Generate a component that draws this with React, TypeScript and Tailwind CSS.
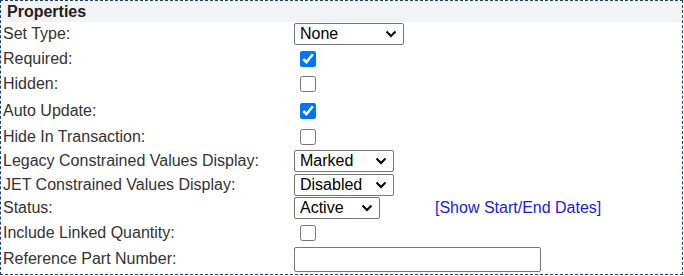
import React from "react";

type Row = {
  label: string;
  h: string;
  control: React.ReactNode;
};

function Select({ value, options, width }: { value: string; options: string[]; width: string }) {
  return (
    <select
      defaultValue={value}
      className={`${width} h-[22px] border border-[#767676] rounded-[2px] bg-white pl-[5px] text-[16px] leading-[18px] text-black appearance-none bg-no-repeat`}
      style={{
        backgroundImage:
          "url(\"data:image/svg+xml,%3Csvg xmlns='http://www.w3.org/2000/svg' width='12' height='8' viewBox='0 0 12 8'%3E%3Cpath d='M1.5 1.5 6 6l4.5-4.5' fill='none' stroke='black' stroke-width='2'/%3E%3C/svg%3E\")",
        backgroundPosition: "right 6px center",
      }}
    >
      {options.map((o) => (
        <option key={o}>{o}</option>
      ))}
    </select>
  );
}

function Check({ checked }: { checked?: boolean }) {
  return (
    <input
      type="checkbox"
      defaultChecked={checked}
      className="ml-[6px] w-4 h-4 accent-[#0075ff]"
    />
  );
}

export default function App() {
  const rows: Row[] = [
    { label: "Set Type:", h: "h-[24px]", control: <Select value="None" options={["None"]} width="w-[110px]" /> },
    { label: "Required:", h: "h-[25px]", control: <Check checked /> },
    { label: "Hidden:", h: "h-[26px]", control: <Check /> },
    { label: "Auto Update:", h: "h-[27px]", control: <Check checked /> },
    { label: "Hide In Transaction:", h: "h-[25px]", control: <Check /> },
    { label: "Legacy Constrained Values Display:", h: "h-[24px]", control: <Select value="Marked" options={["Marked"]} width="w-[100px]" /> },
    { label: "JET Constrained Values Display:", h: "h-[23px]", control: <Select value="Disabled" options={["Disabled"]} width="w-[100px]" /> },
    {
      label: "Status:",
      h: "h-[24px]",
      control: (
        <div className="flex items-center">
          <Select value="Active" options={["Active"]} width="w-[86px]" />
          <a href="#" className="ml-[55px] text-[16px] text-[#1a1ae6]">
            [Show Start/End Dates]
          </a>
        </div>
      ),
    },
    { label: "Include Linked Quantity:", h: "h-[25px]", control: <Check /> },
    {
      label: "Reference Part Number:",
      h: "h-[28px]",
      control: <input type="text" className="w-[247px] h-[25px] border border-[#767676] rounded-[2px] bg-white" />,
    },
  ];

  return (
    <div className="w-[684px] h-[276px] bg-white font-['Liberation_Sans',Arial,sans-serif] text-[16px] text-[#333]">
      <div className="w-[683px] h-[275px] border border-dashed border-[#1f3f6f]">
        <div className="h-[21px] bg-[#f2f3f5] pl-[6px] flex items-center font-bold text-[16px] text-[#222]">
          Properties
        </div>
        {rows.map((r) => (
          <div key={r.label} className={`flex items-center ${r.h}`}>
            <div className="w-[293px] pl-[2px]">{r.label}</div>
            <div className="flex items-center">{r.control}</div>
          </div>
        ))}
      </div>
    </div>
  );
}
